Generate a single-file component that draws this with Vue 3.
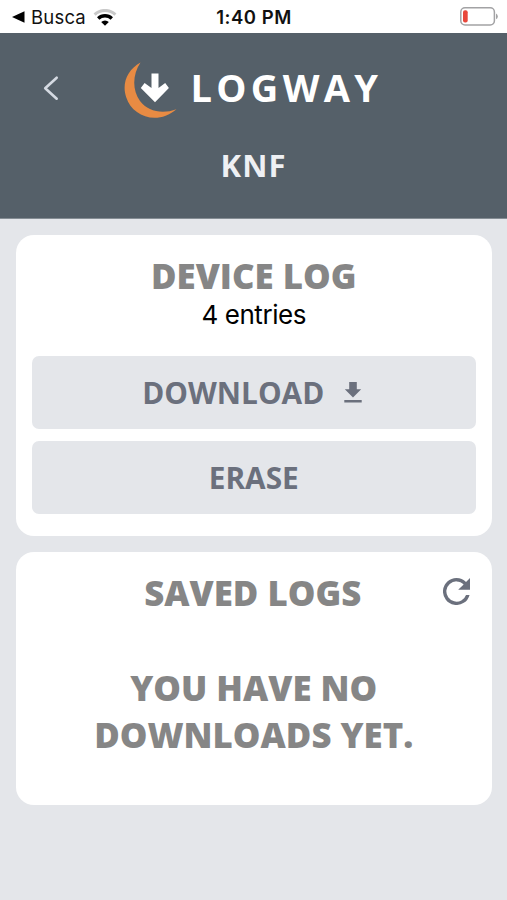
<script setup>
const message = ['YOU HAVE NO', 'DOWNLOADS YET.']
</script>

<template>
  <div class="screen">
    <div class="status">
      <div class="status-left">
        <svg class="back-tri" viewBox="0 0 13 12"><path d="M0 6 12.5 0.2V11.8Z" fill="#000" /></svg>
        <span class="return-app">Busca</span>
        <svg class="wifi" viewBox="0 0 24 17">
          <path d="M1.6 5.6A15 15 0 0 1 22.4 5.6" fill="none" stroke="#c9c9c9" stroke-width="3" />
          <path d="M5.2 9.5A9.8 9.8 0 0 1 18.8 9.5" fill="none" stroke="#000" stroke-width="3.4" />
          <path d="M12 16.7 8.2 13A5.4 5.4 0 0 1 15.8 13Z" fill="#000" />
        </svg>
      </div>
      <span class="clock">1:40 PM</span>
      <div class="status-right">
        <svg class="battery" viewBox="0 0 38 19">
          <rect x="0.8" y="0.8" width="33.6" height="17.2" rx="4.2" fill="#fff" stroke="#a2a2a4" stroke-width="1.5" />
          <rect x="3" y="3.2" width="4.7" height="12.4" rx="2" fill="#e8473b" />
          <path d="M36 6.5Q37.8 7.4 37.8 9.4T36 12.3Z" fill="#a2a2a4" />
        </svg>
      </div>
    </div>

    <header class="header">
      <div class="brand-row">
        <svg class="chevron" viewBox="0 0 18 28"><path d="M14.7 3.7 3.2 14.2 14.7 24.7" fill="none" stroke="#d5dae2" stroke-width="2.6" stroke-linecap="round" stroke-linejoin="round" /></svg>
        <svg class="logo" viewBox="0 0 54 58">
          <path d="M16.5 0.6C3 8 -2.5 22 2.3 35.5C8 54 33 64 52.5 47.3C38 52.5 24 49.5 16 39C8 28 8.500 12.500 16.500 0.600Z" fill="#e88b43" />
          <path d="M27.500 11.500h7v14.500l6.700-5.100 3.700 5L31 40.200 16.800 25.900l3.800-5 6.900 5.100Z" fill="#fff" />
        </svg>
        <span class="wordmark">LOGWAY</span>
      </div>
      <div class="device">KNF</div>
    </header>

    <main class="content">
      <section class="card device-card">
        <h2 class="title">DEVICE LOG</h2>
        <p class="entries">4 entries</p>
        <button class="action">
          <span class="label">DOWNLOAD</span>
          <svg class="download" viewBox="0 0 18 21"><path d="M5.2 0h7.600v7.200H17.200L9 15.400 0.800 7.200h4.400ZM0.300 18h17.400v2.600H0.300Z" fill="#6b707d" /></svg>
        </button>
        <button class="action"><span class="label">ERASE</span></button>
      </section>

      <section class="card saved-card">
        <div class="saved-head">
          <h2 class="title saved-title">SAVED LOGS</h2>
          <svg class="refresh" viewBox="4 4 16 16"><path d="M17.65 6.35A7.96 7.96 0 0 0 12 4a8 8 0 1 0 7.73 10h-2.080A6 6 0 1 1 12 6c1.660 0 3.140.690 4.220 1.780L13 11h7V4l-2.350 2.350z" fill="#6b707d" /></svg>
        </div>
        <p class="empty"><span v-for="line in message" :key="line" class="line">{{ line }}</span></p>
      </section>
    </main>
  </div>
</template>

<style>
body { margin: 0; background: #e4e6ea; }
</style>

<style scoped>
.screen { width: 507px; height: 900px; overflow: hidden; background: #e4e6ea; font-family: "Open Sans", sans-serif; }
.status { height: 33px; box-sizing: border-box; background: #fff; display: grid; grid-template-columns: 1fr auto 1fr; align-items: center; padding: 0 9px 0 12px; font-family: Inter, sans-serif; color: #111; }
.status-left { display: flex; align-items: center; }
.back-tri { width: 13px; height: 12px; }
.return-app { font-size: 18.5px; line-height: 24px; margin: 1px 0 0 6px; letter-spacing: 0.2px; }
.wifi { width: 24px; height: 17px; margin: 1px 0 0 7px; }
.clock { font-size: 18.5px; line-height: 24px; font-weight: 600; margin: 1px 2px 0 0; letter-spacing: 0.5px; }
.status-right { display: flex; justify-content: flex-end; }
.battery { width: 38px; height: 19px; }
.header { height: 185.5px; background: #556069; border-bottom: 1px solid #858d94; box-sizing: border-box; }
.brand-row { display: flex; align-items: center; height: 110px; padding-left: 42px; }
.chevron { width: 18px; height: 28px; }
.logo { width: 54px; height: 58px; margin: 6px 0 0 64px; }
.wordmark { color: #fff; font-size: 38px; line-height: 52px; font-weight: 700; letter-spacing: 4.3px; margin: -2px 0 0 12.5px; }
.device { color: #eef0f4; font-size: 31px; line-height: 44px; font-weight: 700; letter-spacing: 1px; text-align: center; }
.content { padding: 16px 15.5px 0 16px; display: flex; flex-direction: column; gap: 15.5px; }
.card { background: #fff; border-radius: 18px; box-sizing: border-box; padding: 0 16px; }
.device-card { height: 301.500px; padding-top: 17px; }
.title { margin: 0; text-align: center; font-size: 34.8px; line-height: 48px; font-weight: 800; color: #868686; }
.entries { margin: -1px 0 25px; text-align: center; font-family: Inter, sans-serif; font-size: 26px; line-height: 32px; letter-spacing: -0.45px; color: #000; }
.action { display: flex; align-items: center; justify-content: center; width: 100%; height: 73px; padding: 1.5px 0 0; border: 0; border-radius: 7px; background: #e4e6ea; color: #6b707d; font-family: inherit; margin-bottom: 12.5px; box-sizing: border-box; }
.label { font-size: 29.8px; line-height: 42px; font-weight: 700; }
.download { width: 18px; height: 21px; margin: 0 3px 0 20px; }
.saved-card { height: 253.500px; padding-top: 17px; }
.saved-head { display: grid; grid-template-columns: 27px 1fr 27px; align-items: center; padding: 0 6px 0 4px; }
.saved-title { grid-column: 2; white-space: nowrap; }
.refresh { width: 27px; height: 27px; margin-top: -3px; }
.empty { margin: 47px 0 0; text-align: center; font-size: 34.8px; line-height: 47px; font-weight: 800; color: #868686; }
.line { display: block; }
</style>
